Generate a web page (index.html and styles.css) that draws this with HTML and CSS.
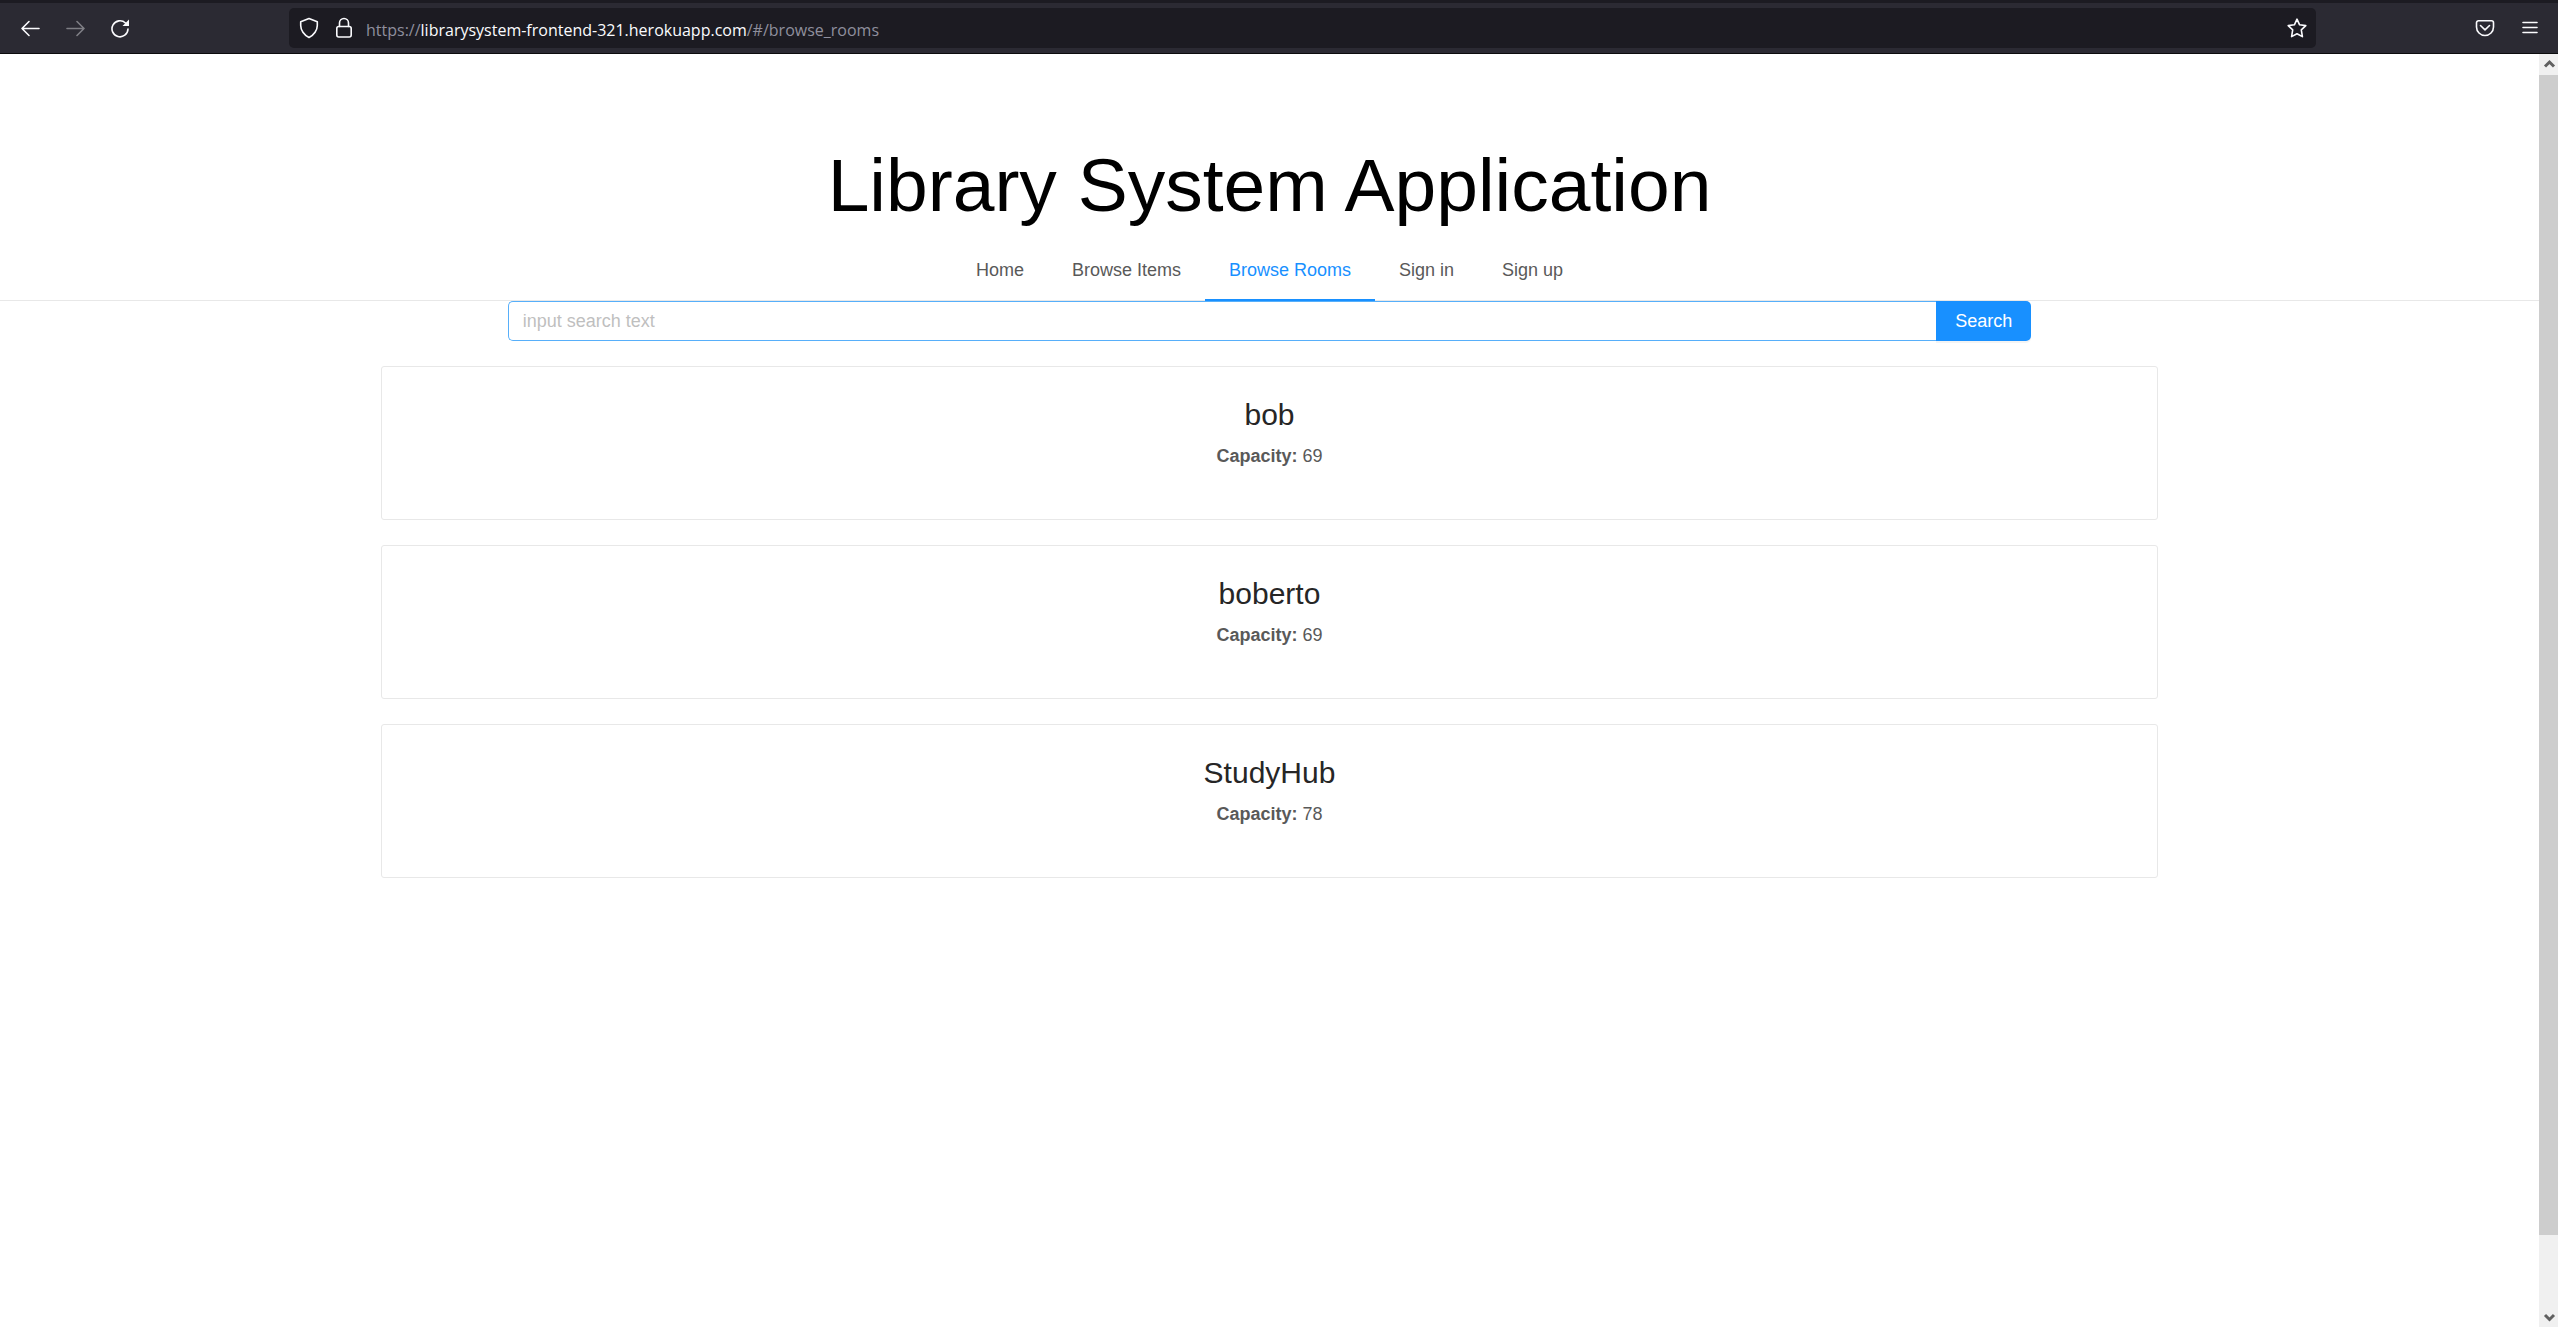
FILE: index.html
```html
<!DOCTYPE html>
<html lang="en">
<head>
<meta charset="utf-8">
<title>Library System Application</title>
<link rel="stylesheet" href="styles.css">
</head>
<body>
<div class="browser">
  <div class="toolbar">
    <div class="toolbar-nav">
      <button class="tool" type="button" aria-label="Back">
        <svg width="20" height="20" viewBox="0 0 20 20"><path d="M9 3.500 2 10.500l7 7M2 10.500h17"/></svg>
      </button>
      <button class="tool tool-disabled" type="button" aria-label="Forward" disabled>
        <svg width="20" height="20" viewBox="0 0 20 20"><path d="m12 3.500 7 7-7 7M19 10.500H2"/></svg>
      </button>
      <button class="tool" type="button" aria-label="Reload">
        <svg width="20" height="20" viewBox="0 0 20 20"><path d="M18 11A8 8 0 1 1 15.500 5"/><path class="solid" d="M19 1.500V8h-6.500z"/></svg>
      </button>
    </div>
    <div class="address">
      <svg width="20" height="22" viewBox="0 0 20 22"><path d="m10 1.500 8.300 3.300v3.700c0 4.500-3.200 9.500-8.300 12-5.100-2.500-8.300-7.500-8.300-12V4.800z"/></svg>
      <svg class="lock" width="18" height="22" viewBox="0 0 18 22"><rect x="1.800" y="9.500" width="14.400" height="10.500" rx="2"/><path d="M4.500 9.500V6a4.500 4.500 0 0 1 9 0v3.500"/></svg>
      <span class="url">https://<b>librarysystem-frontend-321.herokuapp.com</b>/#/browse_rooms</span>
      <button class="tool" type="button" aria-label="Bookmark this page">
        <svg width="20" height="20" viewBox="0 0 20 20"><path d="m10 1.200 2.600 5.600 6.200.8-4.500 4.200 1.100 6.800L10 15.700l-5.400 2.900 1.100-6.800L1.200 7.600l6.200-.8z"/></svg>
      </button>
    </div>
    <div class="toolbar-menu">
      <button class="tool" type="button" aria-label="Save to Pocket">
        <svg width="20" height="20" viewBox="0 0 20 20"><path d="M3.500 2.800h13a2 2 0 0 1 2 2V9a8.500 8.500 0 0 1-17 0V4.800a2 2 0 0 1 2-2zM5.500 7.500l4.500 4.300 4.500-4.300"/></svg>
      </button>
      <button class="tool" type="button" aria-label="Open menu">
        <svg width="20" height="20" viewBox="0 0 20 20"><path d="M3 4.500h14M3 9.500h14M3 14.500h14"/></svg>
      </button>
    </div>
  </div>
  <div class="viewport">
    <div class="page">
      <header class="header">
        <h1 class="title">Library System Application</h1>
        <nav class="menu">
          <a class="menu-item" href="#/">Home</a>
          <a class="menu-item" href="#/browse_items">Browse Items</a>
          <a class="menu-item menu-item-active" href="#/browse_rooms">Browse Rooms</a>
          <a class="menu-item" href="#/sign_in">Sign in</a>
          <a class="menu-item" href="#/sign_up">Sign up</a>
        </nav>
      </header>
      <main>
        <form class="search">
          <input class="search-input" type="text" placeholder="input search text" aria-label="Search rooms">
          <button class="search-button" type="button">Search</button>
        </form>
        <section class="rooms">
          <article class="card"><h2 class="room-name">bob</h2><p class="room-info"><strong>Capacity:</strong> 69</p></article>
          <article class="card"><h2 class="room-name">boberto</h2><p class="room-info"><strong>Capacity:</strong> 69</p></article>
          <article class="card"><h2 class="room-name">StudyHub</h2><p class="room-info"><strong>Capacity:</strong> 78</p></article>
        </section>
      </main>
    </div>
    <div class="scrollbar" aria-hidden="true">
      <svg class="arrow" width="19" height="21" viewBox="0 0 19 21"><path d="m6 12.500 4.500-4.500 4.500 4.500"/></svg>
      <div class="thumb"></div>
      <div class="track"></div>
      <svg class="arrow" width="19" height="21" viewBox="0 0 19 21"><path d="m6 9 4.500 4.500L15 9"/></svg>
    </div>
  </div>
</div>
</body>
</html>
```
FILE: styles.css
```css
* { box-sizing: border-box; }

body {
  margin: 0;
  font-family: "Liberation Sans", Arial, sans-serif;
  font-size: 18px;
  line-height: 28px;
  color: #595959;
  background: #fff;
}

.browser {
  display: flex;
  flex-direction: column;
  min-height: 100vh;
}

/* Browser toolbar */
.toolbar {
  display: flex;
  align-items: center;
  height: 54px;
  padding: 2px 13px 2px 15px;
  background: #2b2a33;
  border-top: 3px solid #1c1b22;
  border-bottom: 1px solid #0c0c0d;
}

.toolbar svg {
  display: block;
  flex: none;
  fill: none;
  stroke: #fbfbfe;
  stroke-width: 1.6;
  stroke-linecap: round;
  stroke-linejoin: round;
}

.toolbar svg .solid {
  fill: #fbfbfe;
  stroke: none;
}

.tool {
  padding: 5px;
  border: 0;
  background: none;
}

.tool-disabled { opacity: 0.4; }

.toolbar-nav {
  display: flex;
  gap: 15px;
  width: 274px;
}

.address {
  flex: 1;
  display: flex;
  align-items: center;
  height: 40px;
  padding: 0 4px 0 10px;
  border-radius: 5px;
  background: #1c1b22;
}

.lock { margin: 0 13px 0 16px; }

.url {
  flex: 1;
  padding-top: 3px;
  font-family: "Open Sans", "Noto Sans", sans-serif;
  font-size: 16px;
  color: #8f8f9d;
}

.url b {
  font-weight: 400;
  color: #fbfbfe;
}

.toolbar-menu {
  display: flex;
  justify-content: flex-end;
  gap: 15px;
  width: 229px;
}

/* Page */
.viewport {
  flex: 1;
  display: flex;
}

.page { flex: 1; }

.header {
  padding-top: 75px;
  border-bottom: 1px solid #e8e8e8;
  text-align: center;
}

.title {
  margin: 0;
  font-size: 75px;
  line-height: 112px;
  font-weight: 400;
  color: #000;
}

.menu {
  display: flex;
  justify-content: center;
  margin-bottom: -1px;
}

.menu-item {
  padding: 15px 24px;
  border-bottom: 2px solid transparent;
  color: #595959;
  text-decoration: none;
}

.menu-item-active {
  color: #1890ff;
  border-bottom-color: #1890ff;
}

.search {
  display: flex;
  width: 60%;
  margin: 0 auto 25px;
}

.search-input {
  flex: 1;
  height: 40px;
  padding: 0 14px;
  border: 1px solid #57affa;
  border-right: 0;
  border-radius: 5px 0 0 5px;
  font: inherit;
}

.search-input::placeholder { color: #bfbfbf; }

.search-button {
  height: 40px;
  padding: 0 19px;
  border: 0;
  border-radius: 0 5px 5px 0;
  background: #1890ff;
  box-shadow: 0 2px 0 #f4f4f4;
  color: #fff;
  font: inherit;
}

.rooms {
  display: flex;
  flex-direction: column;
  gap: 25px;
  width: 70%;
  margin: 0 auto;
}

.card {
  padding: 29px 30px 49px;
  border: 1px solid #e8e8e8;
  border-radius: 3px;
  text-align: center;
}

.room-name {
  margin: 0 0 8px;
  font-size: 30px;
  line-height: 38px;
  font-weight: 400;
  color: #262626;
}

.room-info { margin: 0; }

/* Scrollbar */
.scrollbar {
  display: flex;
  flex-direction: column;
  width: 19px;
  background: #f0f0f0;
}

.thumb {
  flex: 1160;
  background: #cdcdcd;
}

.track { flex: 71; }

.arrow {
  display: block;
  fill: none;
  stroke: #606060;
  stroke-width: 3;
}
```
